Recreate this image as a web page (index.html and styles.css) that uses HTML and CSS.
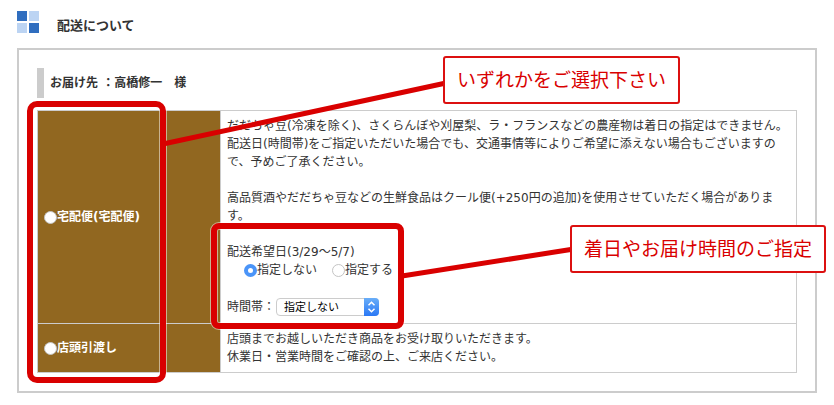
FILE: index.html
```
<!DOCTYPE html>
<html lang="ja">
<head>
    <meta charset="UTF-8">
    <meta name="viewport" content="width=device-width, initial-scale=1.0">
    <title>配送について</title>
    <link rel="stylesheet" href="styles.css">
</head>
<body>
    <header class="page-title">
        <svg class="mark" width="22" height="22" viewBox="0 0 22 22" aria-hidden="true">
            <path fill="#306ebf" d="M0 0h10v10H0zM12 12h10v10H12z"/>
            <path fill="#bcd4f3" d="M12 0h10v10H12zM0 12h10v10H0z"/>
        </svg>
        <h2>配送について</h2>
    </header>

    <form class="box">
        <h3>お届け先 ：高橋修一　様</h3>

        <table class="delivery">
            <tr>
                <th><label class="choice"><input type="radio" name="method" value="1">宅配便(宅配便)</label></th>
                <td>
                    <p>だだちゃ豆(冷凍を除く)、さくらんぼや刈屋梨、ラ・フランスなどの農産物は着日の指定はできません。<br>
                    配送日(時間帯)をご指定いただいた場合でも、交通事情等によりご希望に添えない場合もございますので、予めご了承ください。</p>
                    <p>高品質酒やだだちゃ豆などの生鮮食品はクール便(+250円の追加)を使用させていただく場合があります。</p>
                    <div>配送希望日(3/29〜5/7)</div>
                    <div class="dates">
                        <label class="choice"><input type="radio" name="date" value="0" checked>指定しない</label>
                        <label class="choice"><input type="radio" name="date" value="1">指定する</label>
                    </div>
                    <div class="time">
                        <label for="time">時間帯：</label>
                        <span class="select">
                            <select id="time" name="time">
                                <option>指定しない</option>
                                <option>午前中</option>
                            </select>
                            <svg class="arrows" width="15" height="18" viewBox="0 0 15 18" aria-hidden="true">
                                <path d="M4.5 7.2 7.5 4.2l3 3M4.5 10.8l3 3 3-3"/>
                            </svg>
                        </span>
                    </div>
                </td>
            </tr>
            <tr class="pickup">
                <th><label class="choice"><input type="radio" name="method" value="2">店頭引渡し</label></th>
                <td>店頭までお越しいただき商品をお受け取りいただきます。<br>休業日・営業時間をご確認の上、ご来店ください。</td>
            </tr>
        </table>
    </form>

    <!-- 説明用の赤枠と吹き出し -->
    <svg class="guide" width="834" height="405" viewBox="0 0 834 405" aria-hidden="true">
        <g class="halo">
            <rect x="30" y="104" width="133" height="276" rx="7"/>
            <rect x="214" y="226" width="187" height="100" rx="5"/>
        </g>
        <g class="red">
            <path d="M163 144 446 83M402 276l172-27"/>
            <rect x="30" y="104" width="133" height="276" rx="7"/>
            <rect x="214" y="226" width="187" height="100" rx="5"/>
        </g>
    </svg>
    <div class="note note-method">いずれかをご選択下さい</div>
    <div class="note note-date">着日やお届け時間のご指定</div>
</body>
</html>
```

FILE: styles.css
```
* {
    box-sizing: border-box;
}

body {
    position: relative;
    margin: 0;
    padding: 11px 17px 12px;
    background-color: #fff;
    color: #333;
    font-family: 'DejaVu Sans', 'Noto Sans CJK JP', sans-serif;
    font-size: 12px;
    line-height: 18px;
}

.page-title {
    display: flex;
    gap: 18px;
    margin-bottom: 13px;
}

h2 {
    margin: 0;
    padding-top: 6px;
    font-size: 13px;
    line-height: 18px;
}

.box {
    padding: 18px;
    border: 2px solid #ccc;
}

h3 {
    margin: 0 0 12px;
    padding-left: 6px;
    border-left: 7px solid #ccc;
    font-size: 12px;
    line-height: 30px;
}

.delivery {
    width: 100%;
    border-collapse: collapse;
}

.delivery th,
.delivery td {
    padding: 6px;
    border: 1px solid #ccc;
    text-align: left;
}

.delivery th {
    width: 183px;
    background-color: #916720;
    color: #fff;
}

.pickup {
    height: 49px;
}

p {
    margin: 0 0 18px;
}

.choice {
    display: flex;
    align-items: center;
}

input[type="radio"] {
    appearance: none;
    width: 13px;
    height: 13px;
    margin: 0;
    border: 1px solid #c4c4c4;
    border-radius: 50%;
    background-color: #fff;
}

input[type="radio"]:checked {
    border: 4px solid #4a94f8;
}

.dates {
    display: flex;
    gap: 15px;
    padding-left: 17px;
}

.time {
    display: flex;
    align-items: center;
    margin-top: 18px;
    padding: 1px 0;
}

.select {
    position: relative;
    display: flex;
    margin-left: 1px;
}

select {
    appearance: none;
    width: 103px;
    height: 18px;
    padding: 1px 20px 0 7px;
    border: 1px solid #ccc;
    border-radius: 4px;
    background-color: #fff;
    color: #000;
    font-family: inherit;
    font-size: 11px;
    line-height: 16px;
}

.arrows {
    position: absolute;
    top: 0;
    right: 0;
    border-radius: 0 4px 4px 0;
    background: linear-gradient(#69aef8, #2a78f5);
    fill: none;
    stroke: #fff;
    stroke-width: 1.5;
    pointer-events: none;
}

/* 説明 */
.guide {
    position: absolute;
    top: 0;
    left: 0;
    fill: none;
    pointer-events: none;
}

.halo {
    stroke: #fff;
    stroke-opacity: 0.5;
    stroke-width: 8;
}

.red {
    stroke: #d90000;
    stroke-width: 6;
}

.red path {
    stroke-width: 5;
}

.note {
    position: absolute;
    padding: 8px 12px;
    border: 2px solid #dc1010;
    border-radius: 3px;
    background-color: #fff;
    color: #d90000;
    font-size: 19px;
    line-height: 28px;
    white-space: nowrap;
}

.note-method {
    top: 56px;
    left: 443px;
}

.note-date {
    top: 225px;
    left: 570px;
}
```
